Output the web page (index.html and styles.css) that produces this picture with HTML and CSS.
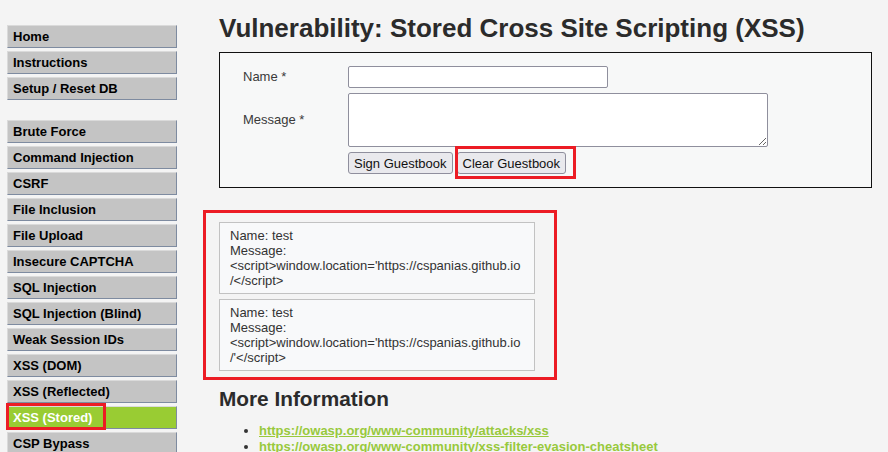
FILE: index.html
```html
<!DOCTYPE html>
<html lang="en">
<head>
<meta charset="utf-8">
<title>Vulnerability: Stored Cross Site Scripting (XSS)</title>
<link rel="stylesheet" href="styles.css">
</head>
<body>
<div class="page">
  <nav class="menu">
    <ul class="menu-group">
      <li class="menu-item">Home</li>
      <li class="menu-item">Instructions</li>
      <li class="menu-item">Setup / Reset DB</li>
    </ul>
    <ul class="menu-group menu-group-second">
      <li class="menu-item">Brute Force</li>
      <li class="menu-item">Command Injection</li>
      <li class="menu-item">CSRF</li>
      <li class="menu-item">File Inclusion</li>
      <li class="menu-item">File Upload</li>
      <li class="menu-item">Insecure CAPTCHA</li>
      <li class="menu-item">SQL Injection</li>
      <li class="menu-item">SQL Injection (Blind)</li>
      <li class="menu-item">Weak Session IDs</li>
      <li class="menu-item">XSS (DOM)</li>
      <li class="menu-item">XSS (Reflected)</li>
      <li class="menu-item selected">XSS (Stored)</li>
      <li class="menu-item">CSP Bypass</li>
    </ul>
  </nav>
  <main class="content">
    <h1 class="title">Vulnerability: Stored Cross Site Scripting (XSS)</h1>
    <form class="guest-form">
      <label class="form-label" for="name">Name *</label>
      <input class="name-input" id="name" type="text">
      <label class="form-label" for="msg">Message *</label>
      <textarea class="msg-input" id="msg"></textarea>
      <span></span>
      <div class="buttons">
        <button type="button" class="btn">Sign Guestbook</button>
        <button type="button" class="btn">Clear Guestbook</button>
      </div>
    </form>
    <div class="entries">
      <div class="entry">Name: test<br>Message:<br>&lt;script&gt;window.location='https://cspanias.github.io<br>/&lt;/script&gt;</div>
      <div class="entry">Name: test<br>Message:<br>&lt;script&gt;window.location='https://cspanias.github.io<br>/'&lt;/script&gt;</div>
    </div>
    <h2 class="subtitle">More Information</h2>
    <ul class="links">
      <li><a href="#">https://owasp.org/www-community/attacks/xss</a></li>
      <li><a href="#">https://owasp.org/www-community/xss-filter-evasion-cheatsheet</a></li>
    </ul>
  </main>
</div>
<div class="mark mark-menu"></div>
<div class="mark mark-clear"></div>
<div class="mark mark-entries"></div>
</body>
</html>
```

FILE: styles.css
```css
html, body {
  margin: 0;
  padding: 0;
}
body {
  background: #f4f4f4;
  font-family: "Liberation Sans", Arial, sans-serif;
  font-size: 13px;
  color: #333;
  height: 452px;
  overflow: hidden;
}
.page {
  display: flex;
  align-items: flex-start;
}
.menu {
  margin: 25px 0 0 7px;
  width: 170px;
  flex: none;
}
.menu-group {
  list-style: none;
  margin: 0;
  padding: 0;
}
.menu-group-second {
  margin-top: 20px;
}
.menu-item {
  box-sizing: border-box;
  height: 23px;
  line-height: 21px;
  margin-bottom: 3px;
  padding-left: 5px;
  background: #c4c4c4;
  border-top: 1px solid #dadada;
  border-left: 1px solid #dadada;
  border-right: 1px solid #7e8ba0;
  border-bottom: 1px solid #7e8ba0;
  font-weight: bold;
  color: #000;
  white-space: nowrap;
}
.menu-item.selected {
  background: #99cc33;
  color: #fff;
}
.content {
  margin-left: 42px;
  padding-top: 13px;
  flex: 1;
}
.title {
  margin: 0;
  font-size: 26px;
  line-height: 30px;
  font-weight: bold;
  color: #2b2b2b;
  white-space: nowrap;
}
.guest-form {
  box-sizing: border-box;
  width: 653px;
  margin-top: 9px;
  border: 1px solid #111;
  background: #f7f8f8;
  padding: 13px 0 13px 23px;
  display: grid;
  grid-template-columns: 105px auto;
  grid-template-rows: 22px 54px 22px;
  row-gap: 5px;
  align-items: center;
  justify-items: start;
}
.form-label {
  color: #3a3a3a;
  line-height: 15px;
  padding-bottom: 2px;
}
.name-input {
  box-sizing: border-box;
  width: 260px;
  height: 22px;
  margin: 0;
  border: 1px solid #8f8f9d;
  border-radius: 2px;
  background: #fff;
}
.msg-input {
  box-sizing: border-box;
  width: 420px;
  height: 54px;
  margin: 0;
  border: 1px solid #8f8f9d;
  border-radius: 2px;
  background: #fff;
  display: block;
}
.buttons {
  display: flex;
  gap: 4px;
}
.btn {
  box-sizing: border-box;
  height: 22px;
  margin: 0;
  padding: 0 5px;
  font-family: "Liberation Sans", Arial, sans-serif;
  font-size: 13px;
  color: #111;
  background: #e9e9ed;
  border: 1px solid #8f8f9d;
  border-radius: 3px;
}
.entries {
  margin-top: 34px;
  display: flex;
  flex-direction: column;
  gap: 5px;
}
.entry {
  box-sizing: border-box;
  width: 316px;
  padding: 5px 10px;
  border: 1px solid #c2c2c2;
  background: #f8f9fa;
  line-height: 15px;
  color: #333;
  white-space: nowrap;
}
.subtitle {
  margin: 16px 0 0;
  font-size: 20.8px;
  line-height: 24px;
  font-weight: bold;
  color: #2b2b2b;
}
.links {
  margin: 12px 0 0;
  padding-left: 40px;
  line-height: 16px;
}
.links a {
  color: #98c93c;
  font-weight: bold;
  text-decoration: underline;
}
.mark {
  position: absolute;
  box-sizing: border-box;
  border: 3px solid #ec1c24;
  pointer-events: none;
}
.mark-menu {
  left: 6px;
  top: 403px;
  width: 100px;
  height: 27px;
}
.mark-clear {
  left: 455px;
  top: 146px;
  width: 121px;
  height: 33px;
}
.mark-entries {
  left: 203px;
  top: 210px;
  width: 354px;
  height: 170px;
}
```
